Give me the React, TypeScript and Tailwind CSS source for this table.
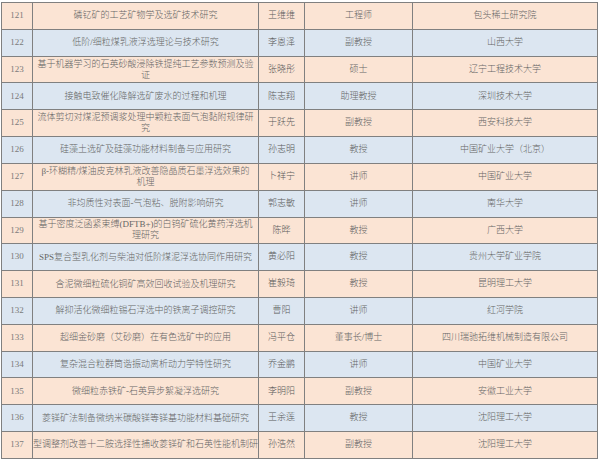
import React from "react";

type Row = { no: string; title: string[]; name: string; pos: string; org: string; clip?: boolean };

const rows: Row[] = [
  { no: "121", title: ["磷钇矿的工艺矿物学及选矿技术研究"], name: "王维维", pos: "工程师", org: "包头稀土研究院" },
  { no: "122", title: ["低阶/细粒煤乳液浮选理论与技术研究"], name: "李恩泽", pos: "副教授", org: "山西大学" },
  { no: "123", title: ["基于机器学习的石英砂酸浸除铁提纯工艺参数预测及验", "证"], name: "张晓彤", pos: "硕士", org: "辽宁工程技术大学" },
  { no: "124", title: ["接触电致催化降解选矿废水的过程和机理"], name: "陈志翔", pos: "助理教授", org: "深圳技术大学" },
  { no: "125", title: ["流体剪切对煤泥预调浆处理中颗粒表面气泡黏附规律研", "究"], name: "于跃先", pos: "副教授", org: "西安科技大学" },
  { no: "126", title: ["硅藻土选矿及硅藻功能材料制备与应用研究"], name: "孙志明", pos: "教授", org: "中国矿业大学（北京）" },
  { no: "127", title: ["β-环糊精/煤油皮克林乳液改善隐晶质石墨浮选效果的", "机理"], name: "卜祥宁", pos: "讲师", org: "中国矿业大学" },
  { no: "128", title: ["非均质性对表面-气泡粘、脱附影响研究"], name: "郭志敏", pos: "讲师", org: "南华大学" },
  { no: "129", title: ["基于密度泛函紧束缚(DFTB+)的白钨矿硫化黄药浮选机", "理研究"], name: "陈晔", pos: "教授", org: "广西大学" },
  { no: "130", title: ["SPS复合型乳化剂与柴油对低阶煤泥浮选协同作用研究"], name: "黄必阳", pos: "教授", org: "贵州大学矿业学院" },
  { no: "131", title: ["含泥微细粒硫化铜矿高效回收试验及机理研究"], name: "崔毅琦", pos: "教授", org: "昆明理工大学" },
  { no: "132", title: ["解抑活化微细粒锡石浮选中的铁离子调控研究"], name: "曹阳", pos: "讲师", org: "红河学院" },
  { no: "133", title: ["超细金砂磨（艾砂磨）在有色选矿中的应用"], name: "冯平仓", pos: "董事长/博士", org: "四川瑞驰拓维机械制造有限公司" },
  { no: "134", title: ["复杂混合粒群筒谐振动离析动力学特性研究"], name: "乔金鹏", pos: "讲师", org: "中国矿业大学" },
  { no: "135", title: ["微细粒赤铁矿-石英异步絮凝浮选研究"], name: "李明阳", pos: "副教授", org: "安徽工业大学" },
  { no: "136", title: ["菱镁矿法制备微纳米碳酸镁等镁基功能材料基础研究"], name: "王余莲", pos: "教授", org: "沈阳理工大学" },
  { no: "137", title: ["型调整剂改善十二胺选择性捕收菱镁矿和石英性能机制研"], name: "孙浩然", pos: "副教授", org: "沈阳理工大学", clip: true },
];

const font = { fontFamily: '"Liberation Serif", "Noto Sans CJK SC", serif' };

export default function App() {
  return (
    <div className="w-[600px] h-[463px] bg-white relative overflow-hidden" style={font}>
      <div className="ml-[1px] mt-[2px] w-[597px] border-l border-t border-[#808080]">
        {rows.map((r, i) => (
          <div
            key={r.no}
            className={`flex h-[26.82px] border-b border-[#808080] text-[9px] font-light text-[#666] ${
              i % 2 === 0 ? "bg-[#fbe4d4]" : "bg-[#dce6f1]"
            }`}
          >
            <div className="w-[31px] shrink-0 border-r border-[#808080] flex items-center justify-center text-[#7a7a7a]">
              {r.no}
            </div>
            <div
              className={`w-[226px] shrink-0 border-r border-[#808080] flex flex-col items-center justify-center leading-[11px] overflow-hidden ${
                r.clip ? "whitespace-nowrap" : ""
              }`}
            >
              {r.title.map((t, k) => (
                <span key={k} className="whitespace-nowrap">
                  {t}
                </span>
              ))}
            </div>
            <div className="w-[46px] shrink-0 border-r border-[#808080] flex items-center justify-center text-[#5a5a5a]">
              {r.name}
            </div>
            <div className="w-[108px] shrink-0 border-r border-[#808080] flex items-center justify-center">
              {r.pos}
            </div>
            <div className="w-[185px] shrink-0 border-r border-[#808080] flex items-center justify-center">
              {r.org}
            </div>
          </div>
        ))}
      </div>
    </div>
  );
}
